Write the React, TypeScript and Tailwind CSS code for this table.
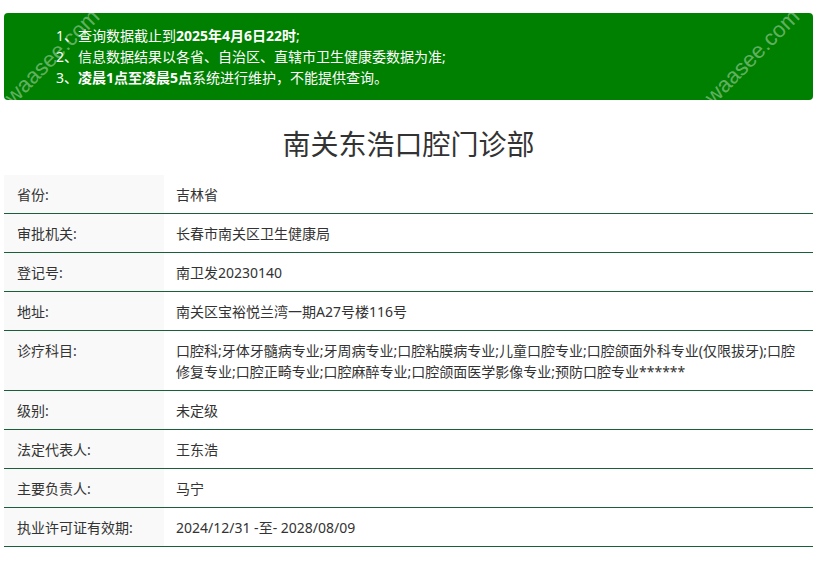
import React from "react";

const rows: { label: string; value: string }[] = [
  { label: "省份:", value: "吉林省" },
  { label: "审批机关:", value: "长春市南关区卫生健康局" },
  { label: "登记号:", value: "南卫发20230140" },
  { label: "地址:", value: "南关区宝裕悦兰湾一期A27号楼116号" },
  {
    label: "诊疗科目:",
    value:
      "口腔科;牙体牙髓病专业;牙周病专业;口腔粘膜病专业;儿童口腔专业;口腔颌面外科专业(仅限拔牙);口腔修复专业;口腔正畸专业;口腔麻醉专业;口腔颌面医学影像专业;预防口腔专业******",
  },
  { label: "级别:", value: "未定级" },
  { label: "法定代表人:", value: "王东浩" },
  { label: "主要负责人:", value: "马宁" },
  { label: "执业许可证有效期:", value: "2024/12/31 -至- 2028/08/09" },
];

const marks = [
  { x: -10, y: 40 },
  { x: 690, y: 40 },
];

export default function App() {
  return (
    <div className="relative min-h-[579px] w-[822px] overflow-hidden bg-white pl-1 pr-[9px] pt-[13px] font-['Noto_Sans','Noto_Sans_CJK_SC',sans-serif] text-[14px] text-[#333]">
      {/* Notice */}
      <div className="rounded bg-[#008000] py-3 pl-[52px] text-[14px] leading-[21px] text-white">
        <p>
          1、查询数据截止到<b>2025年4月6日22时</b>;
        </p>
        <p>2、信息数据结果以各省、自治区、直辖市卫生健康委数据为准;</p>
        <p>
          3、<b>凌晨1点至凌晨5点</b>系统进行维护，不能提供查询。
        </p>
      </div>

      <h1 className="mt-6 mb-[11px] text-center text-[28px] leading-10 font-normal text-[#333]">
        南关东浩口腔门诊部
      </h1>

      {/* Detail table */}
      <div>
        {rows.map((r) => (
          <div key={r.label} className="flex border-b border-[#1b5e3c] leading-[21px]">
            <div className="w-[160px] shrink-0 bg-[#f9f9f9] px-[13px] py-[8.5px]">{r.label}</div>
            <div className="flex-1 px-3 py-[8.5px]">{r.value}</div>
          </div>
        ))}
      </div>

      {/* watermarks */}
      {marks.map((m, i) => (
        <span
          key={i}
          className="pointer-events-none absolute -rotate-45 font-['Liberation_Sans',sans-serif] text-[22px] text-white/40"
          style={{ left: m.x, top: m.y }}
        >
          waasee.com
        </span>
      ))}
    </div>
  );
}
